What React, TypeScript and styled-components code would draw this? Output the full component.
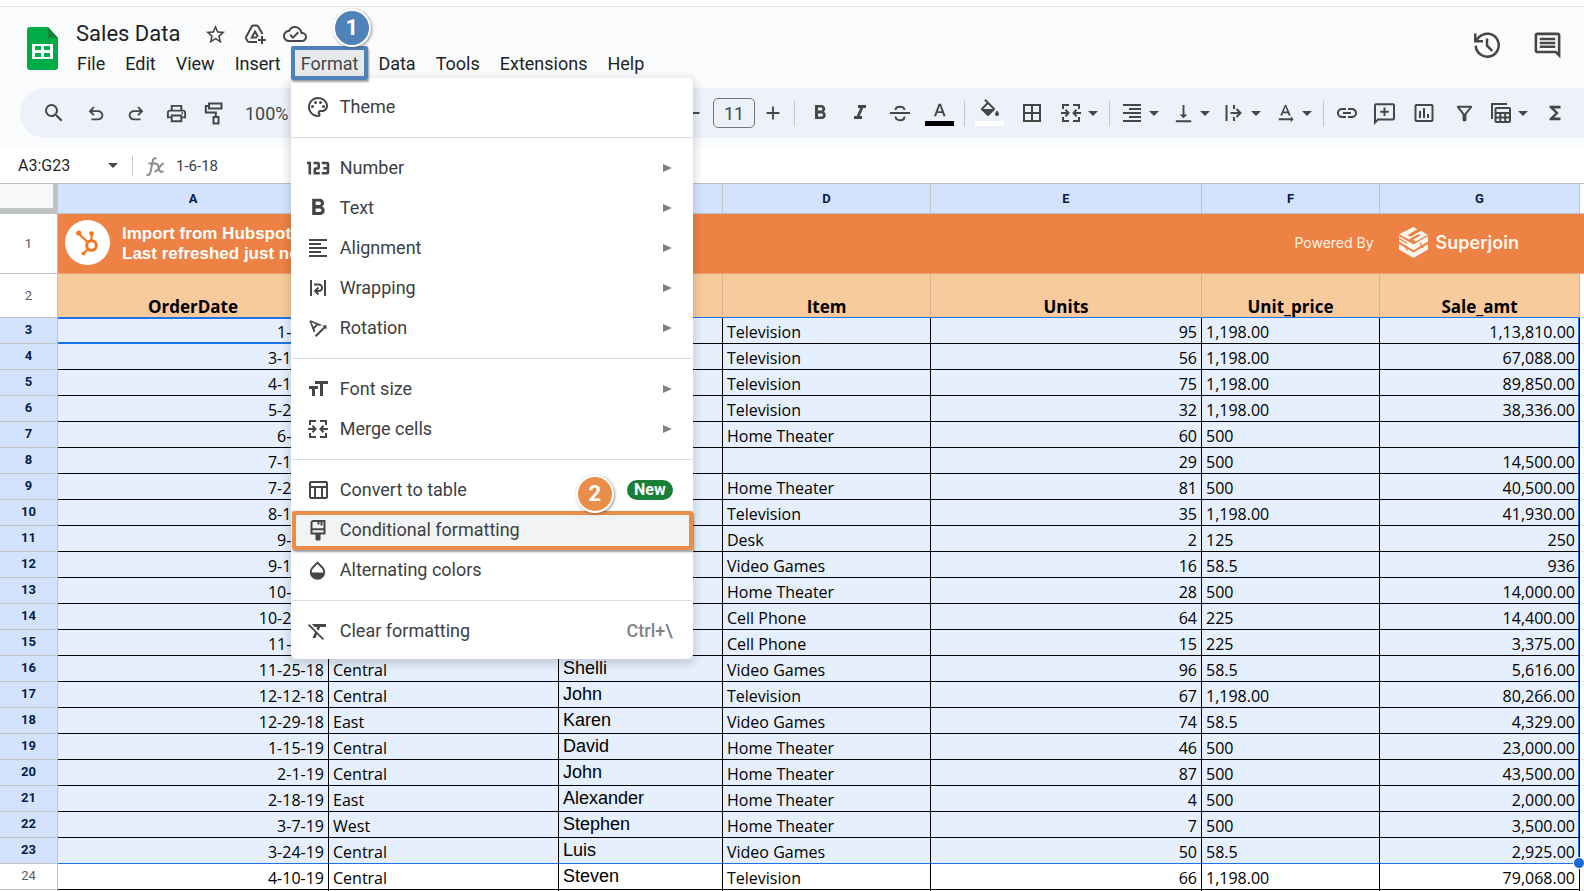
import React from 'react';
import styled, { createGlobalStyle, css } from 'styled-components';
import {
  MdAdd,
  MdBorderAll,
  MdFormatAlignLeft,
  MdFormatAlignRight,
  MdFormatBold,
  MdFormatClear,
  MdFormatItalic,
  MdFormatSize,
  MdFunctions,
  MdInsertChartOutlined,
  MdLink,
  MdOpacity,
  MdOutlineCloudDone,
  MdOutlineComment,
  MdOutlineFilterAlt,
  MdOutlinePalette,
  MdOutlinePrint,
  MdOutlineTableChart,
  MdRemove,
  MdSearch,
  MdStarBorder,
  MdTextRotationAngleup,
  MdTextRotationNone,
  MdVerticalAlignBottom,
} from 'react-icons/md';

const ui = "Roboto, 'Liberation Sans', sans-serif";
const grid = "'Open Sans', 'Noto Sans', sans-serif";
const arial = "'Liberation Sans', Arial, sans-serif";

const GlobalStyle = createGlobalStyle`
  *, *::before, *::after { box-sizing: border-box; }
  body { margin: 0; background: #fff; font-family: ${ui}; color: #1f1f1f; }
  button, input, select { font: inherit; color: inherit; margin: 0; padding: 0; border: 0; background: none; }
  svg { display: block; flex: none; }
`;

/* ---------- page frame ---------- */

const Page = styled.div`
  display: flex;
  flex-direction: column;
  height: 100vh;
  overflow: hidden;
  padding-top: 6px;
`;

const Chrome = styled.div`
  flex: none;
  background: #f9fbfd;
  border-top: 1px solid #dfe3e7;
  padding-bottom: 10px;
`;

const Header = styled.header`
  display: flex;
  align-items: flex-start;
  height: 81px;
  padding: 12px 17px 0 27px;
`;

const LogoLink = styled.a`
  margin-top: 8px;
  width: 40px;
  flex: none;
`;

const Titles = styled.div`
  flex: 1;
  min-width: 0;
`;

const TitleRow = styled.div`
  display: flex;
  align-items: center;
  height: 30px;
  padding-left: 9px;
`;

const DocTitle = styled.h1`
  margin: 0 15px 0 0;
  font-size: 22px;
  font-weight: 400;
  line-height: 28px;
`;

const IconButton = styled.button`
  display: flex;
  align-items: center;
  justify-content: center;
  width: 40px;
  height: 30px;
  color: #444746;
`;

const MenuBar = styled.nav`
  display: flex;
`;

const MenuSlot = styled.div`
  position: relative;
`;

const MenuName = styled.button<{ $open?: boolean }>`
  height: 29px;
  padding: 0 10px;
  font-size: 18px;
  line-height: 29px;
  background: ${(p) => (p.$open ? '#e6eaec' : 'transparent')};
  color: ${(p) => (p.$open ? '#444746' : '#1f1f1f')};
`;

const HeaderActions = styled.div`
  display: flex;
  gap: 20px;
  padding-top: 11px;
`;

/* ---------- callouts ---------- */

const calloutColor = { blue: '#4f82b8', orange: '#e88e48' };

const Frame = styled.span<{ $tone: keyof typeof calloutColor }>`
  position: absolute;
  z-index: 3;
  pointer-events: none;
  inset: ${(p) => (p.$tone === 'blue' ? '-3px 0 -2px 0' : '1px 0 0 1px')};
  border: 4px solid ${(p) => calloutColor[p.$tone]};
  border-radius: 2px;
  box-shadow: 1px 2px 2px rgba(60, 64, 67, 0.5);
`;

const StepBadge = styled.span<{ $tone: keyof typeof calloutColor }>`
  position: absolute;
  z-index: 4;
  top: ${(p) => (p.$tone === 'blue' ? '-40px' : '-35px')};
  ${(p) => (p.$tone === 'blue' ? 'left: 42px;' : 'right: 79px;')}
  width: 38px;
  height: 38px;
  border: 2px solid #fff;
  border-radius: 50%;
  background: ${(p) => calloutColor[p.$tone]};
  box-shadow: 1px 1px 3px rgba(60, 64, 67, 0.55);
  color: #fff;
  font-size: 22px;
  font-weight: 700;
  line-height: 34px;
  text-align: center;
`;

/* ---------- format menu ---------- */

const Dropdown = styled.div`
  position: absolute;
  z-index: 2;
  top: 100%;
  left: 0;
  width: 402px;
  padding: 9px 0 8px;
  border-radius: 5px;
  background: #fff;
  box-shadow: 0 3px 8px 2px rgba(60, 64, 67, 0.2);
`;

const MenuItem = styled.button<{ $active?: boolean }>`
  position: relative;
  display: flex;
  align-items: center;
  width: 100%;
  height: 40px;
  padding: 0 20px 0 15px;
  font-size: 18px;
  text-align: left;
  color: #3c4043;
  background: ${(p) => (p.$active ? '#f1f3f4' : 'transparent')};
`;

const MenuIcon = styled.span`
  display: flex;
  justify-content: center;
  width: 24px;
  margin-right: 10px;
  color: #444746;
`;

const MenuLabel = styled.span`
  flex: 1;
  padding-bottom: 2px;
`;

const Divider = styled.hr`
  height: 1px;
  margin: 10px 1px;
  border: 0;
  background: #d7dce2;
`;

const Shortcut = styled.kbd`
  padding-bottom: 2px;
  font-family: ${ui};
  font-weight: 500;
  color: #808487;
`;

const NewTag = styled.span`
  padding: 0 7px;
  border-radius: 10px;
  background: #188038;
  color: #fff;
  font-size: 16px;
  font-weight: 700;
  line-height: 20px;
`;

/* ---------- toolbar ---------- */

const Toolbar = styled.div`
  display: flex;
  align-items: center;
  height: 50px;
  margin-left: 20px;
  padding-left: 12px;
  overflow: hidden;
  border-radius: 25px 0 0 25px;
  background: #ecf1fa;
  color: #444746;
`;

const Tool = styled.button<{ $size?: 's' | 'm' | 'l' }>`
  display: flex;
  flex: none;
  align-items: center;
  justify-content: center;
  width: ${(p) => (p.$size === 's' ? 35 : p.$size === 'l' ? 44 : 40)}px;
  height: 40px;
`;

const SplitTool = styled.button`
  display: flex;
  flex: none;
  align-items: center;
  width: 51px;
  height: 40px;
`;

const SplitIcon = styled.span`
  display: flex;
  justify-content: center;
  width: 34px;
`;

const Caret = styled.span`
  flex: none;
  width: 10px;
  border: 5px solid transparent;
  border-top-color: #444746;
  border-bottom: 0;
`;

const Separator = styled.span`
  flex: none;
  width: 1px;
  height: 25px;
  margin: 0 5px 0 4px;
  background: #c4c7c5;
`;

const ZoomSelect = styled.select`
  flex: none;
  width: 432px;
  padding-left: 14px;
  appearance: none;
  font-size: 18px;
`;

const SizeInput = styled.input`
  flex: none;
  width: 42px;
  height: 30px;
  border: 1px solid #747775;
  border-radius: 5px;
  font-size: 18px;
  text-align: center;
`;

/* ---------- formula bar ---------- */

const FormulaBar = styled.div`
  display: flex;
  flex: none;
  align-items: center;
  height: 35px;
  background: #fff;
`;

const NameBox = styled.input`
  width: 90px;
  padding-left: 18px;
  font-size: 16px;
  box-sizing: content-box;
`;

const BarLine = styled.span`
  width: 1px;
  height: 20px;
  margin: 0 13px 0 14px;
  background: #c4c7c5;
`;

const FormulaInput = styled.input`
  flex: 1;
  min-width: 0;
  margin-left: 11px;
  font-size: 15px;
  color: #3c4043;
`;

/* ---------- sheet ---------- */

const SheetArea = styled.main`
  flex: 1;
  min-height: 0;
  overflow: hidden;
  border-top: 1px solid #c0c3c6;
`;

const Sheet = styled.table`
  width: 100%;
  table-layout: fixed;
  border-collapse: separate;
  border-spacing: 0;
  font-family: ${grid};
  font-size: 16px;
  line-height: 22px;
  color: #000;

  th, td { padding: 0; white-space: nowrap; }
`;

const Col = styled.col<{ $w?: number }>`
  ${(p) => p.$w && css`width: ${p.$w}px;`}
`;

const Corner = styled.td`
  height: 30px;
  border: solid #c0c3c3;
  border-width: 0 5px 6px 0;
  background: #f8f9fa;
`;

const ColumnHead = styled.th`
  border-right: 1px solid #c0c3c6;
  border-bottom: 1px solid #c0c3c6;
  background: #d3e3fd;
  color: #041e49;
  font-family: ${ui};
  font-size: 13px;
  font-weight: 700;
`;

const EdgeHead = styled.td`
  border-bottom: 1px solid #c0c3c6;
  background: #fff;
`;

const RowHead = styled.th<{ $selected?: boolean; $short?: boolean }>`
  ${(p) => p.$short && css`&& { padding-bottom: 2px; }`}
  border-right: 1px solid #c0c3c6;
  border-bottom: 1px solid #c0c3c6;
  background: ${(p) => (p.$selected ? '#d3e3fd' : '#fff')};
  color: ${(p) => (p.$selected ? '#041e49' : '#575b5f')};
  font-family: ${ui};
  font-size: 13px;
  font-weight: ${(p) => (p.$selected ? 700 : 400)};
`;

const BannerCell = styled.td`
  height: 60px;
  border-bottom: 1px solid #e9a273;
  background: #ee8144;
  color: #fff;
`;

const Banner = styled.div`
  display: flex;
  align-items: center;
  height: 59px;
  padding: 0 65px 2px 7px;
`;

const HubCircle = styled.span`
  display: flex;
  align-items: center;
  justify-content: center;
  width: 45px;
  height: 45px;
  margin-right: 12px;
  border-radius: 50%;
  background: #fff;
`;

const BannerText = styled.p`
  flex: 1;
  margin: 0;
  padding-top: 2px;
  font-family: ${arial};
  font-size: 17px;
  font-weight: 700;
  line-height: 20px;
`;

const PoweredBy = styled.span`
  margin-right: 25px;
  font-family: Inter, sans-serif;
  font-size: 14px;
  color: #fff3e4;
`;

const Brand = styled.span`
  margin-left: 8px;
  font-family: Inter, sans-serif;
  font-size: 18px;
  font-weight: 600;
  color: #fff6ea;
`;

const TitleCell = styled.td`
  height: 44px;
  border-right: 1px solid #deb092;
  border-bottom: 1px solid #1a73e8;
  background: #f9ca9c;
  font-size: 17px;
  font-weight: 700;
  line-height: 20px;
  text-align: center;
  vertical-align: bottom;
`;

type CellProps = { $selected?: boolean; $align?: 'left' | 'right'; $active?: boolean; $last?: boolean; $edge?: boolean };

const Cell = styled.td<CellProps>`
  position: relative;
  height: 26px;
  && { padding: 0 4px; }
  border-right: 1px solid #000;
  border-bottom: 1px solid ${(p) => (p.$last ? '#1a73e8' : '#000')};
  background: ${(p) => (p.$selected ? '#e5effd' : '#fff')};
  text-align: ${(p) => p.$align ?? 'left'};
  vertical-align: bottom;
  ${(p) => p.$edge && p.$selected && css`box-shadow: inset -1px 0 0 #1a73e8;`}
  ${(p) =>
    p.$active &&
    css`
      border-bottom-color: #1a73e8;
      box-shadow: inset 0 1px 0 #1a73e8, inset 0 -1px 0 #1a73e8;
    `}
`;

const NameCell = styled(Cell)`
  && { padding: 1px 4px 0; }
  font-family: ${arial};
  font-size: 18px;
  vertical-align: top;
`;

const EdgeCell = styled.td`
  border-bottom: 1px solid #e2e3e3;
  background: #fff;
`;

const FillHandle = styled.span`
  position: absolute;
  z-index: 1;
  right: -6px;
  bottom: -6px;
  width: 12px;
  height: 12px;
  border: 1px solid #fff;
  border-radius: 50%;
  background: #1967d2;
`;

/* ---------- icons ---------- */

type IconProps = { size?: number; flip?: boolean };

const StrokeSvg = styled.svg`
  fill: none;
  stroke: currentColor;
  stroke-width: 2;
`;

const Stroke = ({ size = 24, children }: IconProps & { children: React.ReactNode }) => (
  <StrokeSvg width={size} height={size} viewBox="0 0 24 24" aria-hidden="true">
    {children}
  </StrokeSvg>
);

const SheetsLogo = () => (
  <svg width="31" height="43" viewBox="0 0 31 43" aria-hidden="true">
    <path d="M3 0h18l10 11v29a3 3 0 0 1-3 3H3a3 3 0 0 1-3-3V3a3 3 0 0 1 3-3z" fill="#00ac47" />
    <path d="M21 0l10 11H21z" fill="#188038" />
    <path d="M5 17h21v15H5zM8 19v4h6v-4zm9 0v4h6v-4zM8 26v4h6v-4zm9 0v4h6v-4z" fill="#fff" fillRule="evenodd" />
  </svg>
);

const DriveAddIcon = () => (
  <Stroke>
    <path d="M14 20H6.200q-1.200 0-1.800-1l-1.200-2.200q-.5-1 0-2L8.800 4.500q.6-1 1.700-1h3q1.100 0 1.700 1l4.300 7.500" />
    <path d="M14 15.500H8.800L12 9.600l3 5.200M19 14v8M15 18h8" />
  </Stroke>
);

const UndoIcon = ({ flip }: IconProps) => (
  <svg width="22" height="22" viewBox="0 0 24 24" fill="currentColor" aria-hidden="true">
    <path
      transform={flip ? 'matrix(-1 0 0 1 24 1)' : 'translate(0 1)'}
      d="M7 19v-2h7.1q1.575 0 2.737-1T18 13.5t-1.163-2.5T14.1 10H7.8l2.6 2.6L9 14 4 9l5-5 1.4 1.4L7.8 8h6.3q2.425 0 4.163 1.575T20 13.5t-1.737 3.925T14.1 19z"
    />
  </svg>
);

const RollerIcon = () => (
  <Stroke>
    <path d="M7 2.500h12.500v5H7zM7 5H3.800v6.500h10V16M11.500 16h5v6.500h-5z" />
  </Stroke>
);

const StrikeIcon = () => (
  <Stroke>
    <path d="M2 12h20M7.500 9c0-4.500 8.500-4.500 9 0M7.500 15.500c.5 5 9 5 9 0" />
  </Stroke>
);

const TextColorIcon = () => (
  <svg width="30" height="28" viewBox="0 0 30 28" aria-hidden="true">
    <path
      transform="translate(4 2) scale(.9)"
      fill="currentColor"
      d="M5.490 17h2.420l1.270-3.580h5.650L16.090 17h2.420L13.250 3h-2.500L5.490 17zm4.420-5.610l2.030-5.790h.12l2.030 5.790H9.910z"
    />
    <path d="M0 22h29v5H0z" fill="#000" />
  </svg>
);

const FillColorIcon = () => (
  <svg width="30" height="28" viewBox="0 0 30 28" aria-hidden="true">
    <path
      transform="translate(3)"
      fill="currentColor"
      d="M16.560 8.940L7.620 0 6.210 1.410l2.380 2.380-5.150 5.150c-.59.59-.59 1.540 0 2.120l5.500 5.500c.29.29.68.44 1.060.44s.77-.15 1.060-.44l5.500-5.500c.59-.58.59-1.530 0-2.120zM5.210 10L10 5.210 14.790 10H5.210zM19 11.500s-2 2.170-2 3.500c0 1.100.9 2 2 2s2-.9 2-2c0-1.330-2-3.500-2-3.500z"
    />
    <path d="M0 22h29v5H0z" fill="#fff" />
  </svg>
);

const NumberIcon = () => (
  <StrokeSvg width="24" height="24" viewBox="0 0 24 24" aria-hidden="true">
    <path
      strokeWidth="2.600"
      d="M1 7h2.800v11.500M7.500 7h4.200q1 0 1 1v3.500q0 1-1 1H9.800q-1 0-1 1v3.700h5M15.800 7h5.200q1 0 1 1v8.200q0 1-1 1h-5.200M17.300 12.200H22"
    />
  </StrokeSvg>
);

const MergeIcon = () => (
  <Stroke>
    <path d="M10 4H4v4M4 16v4h6M14 4h6v4M20 16v4h-6M2 12h7M6.500 8.800L9.500 12l-3 3.200M22 12h-7M17.500 8.800L14.500 12l3 3.200" />
  </Stroke>
);

const OverflowIcon = () => (
  <Stroke>
    <path d="M4.500 4v16M12 4v4M12 16v4M8.500 12H18M14.500 8l4 4-4 4" />
  </Stroke>
);

const WrapIcon = () => (
  <Stroke>
    <path d="M5 4v16M19 4v16M8 8.500h4.800a3.200 3.200 0 0 1 0 6.500H10M12.500 11.500L9 15l3.500 3.500" />
  </Stroke>
);

const AddCommentIcon = () => (
  <Stroke>
    <path d="M3 21.500V4.200q0-1 1-1h17q1 0 1 1v13.300q0 1-1 1H6zM12.500 6.500v8.500M8.200 10.800h8.600" />
  </Stroke>
);

const TableViewsIcon = () => (
  <Stroke>
    <path d="M3 18V3h15M7.500 7H20q1 0 1 1v12q0 1-1 1H7.500q-1 0-1-1V8q0-1 1-1zM6.500 12H21M6.500 16.500H21M11.300 12v9M16.200 12v9" />
  </Stroke>
);

const BrushIcon = () => (
  <Stroke>
    <path d="M5.500 15.500V5q0-2 2-2h11v12.500zM5.500 11.300h13M12.500 3v3.500M15.500 3v4.500" />
    <path d="M9.500 15h5v6.500q0 1-1 1h-3q-1 0-1-1z" fill="currentColor" stroke="none" />
  </Stroke>
);

const HistoryIcon = () => (
  <Stroke size={30}>
    <path d="M3 12.500a9.200 9.200 0 1 0 2.800-7L2.600 9M2.600 2.800V9h6.200M12 6.800v5.700l4.200 4.200" />
  </Stroke>
);

const FxIcon = () => (
  <svg width="19" height="22" viewBox="0 0 19 22" fill="none" stroke="#8a8d90" strokeWidth="2" aria-hidden="true">
    <path d="M10.500 3.500C8 2.500 7 4 6.500 7L4.500 17c-.5 2.500-1.500 3.500-4 2.500M2.500 8.500h7M9 9c3-1 3 2 4.500 6 .5 2 2 2.500 4 1M18 8.500c-4-.5-5 8.500-9.500 8" />
  </svg>
);

const HubSpotIcon = () => (
  <svg width="24" height="28" viewBox="0 0 24 28" fill="none" stroke="#f57722" aria-hidden="true">
    <circle cx="15.500" cy="16.500" r="4.800" strokeWidth="3" />
    <path d="M15.500 11V6M11.500 13L3.500 5.500M12 20l-4 4" strokeWidth="2.200" />
    <g fill="#f57722" stroke="none">
      <circle cx="15.500" cy="4.500" r="2.300" />
      <circle cx="2.800" cy="4" r="2.600" />
      <circle cx="7.500" cy="24.500" r="1.900" />
    </g>
  </svg>
);

const SuperjoinLogo = () => (
  <svg width="29" height="31" viewBox="0 0 29 31" aria-hidden="true">
    <g fill="#fff8ee">
      <path d="M14.500 0l3.800 2.200L8.500 8l3 1.800L22 3.800l6.500 3.900L17 14.500l-3-1.800 7.500-4.500-2-1.200-9.500 5.600L0 7.200z" />
      <path d="M0 9l14.500 8.600L29 9v5.600l-14.500 8.600L0 14.600z" />
      <path d="M0 17l14.500 8.600L29 17v5.400L14.500 31 0 22.400z" />
    </g>
    <path d="M0 11.500l8 4.700M21 15.800l3 5M5.500 18.500l3 5" stroke="#ee8144" strokeWidth="1.300" />
  </svg>
);

/* ---------- data ---------- */

type MenuEntry = {
  label: string;
  icon: React.ReactNode;
  submenu?: boolean;
  isNew?: boolean;
  active?: boolean;
  shortcut?: string;
};

const formatMenu: MenuEntry[][] = [
  [{ label: 'Theme', icon: <MdOutlinePalette size={24} /> }],
  [
    { label: 'Number', icon: <NumberIcon />, submenu: true },
    { label: 'Text', icon: <MdFormatBold size={28} />, submenu: true },
    { label: 'Alignment', icon: <MdFormatAlignLeft size={24} />, submenu: true },
    { label: 'Wrapping', icon: <WrapIcon />, submenu: true },
    { label: 'Rotation', icon: <MdTextRotationAngleup size={24} />, submenu: true },
  ],
  [
    { label: 'Font size', icon: <MdFormatSize size={24} />, submenu: true },
    { label: 'Merge cells', icon: <MergeIcon />, submenu: true },
  ],
  [
    { label: 'Convert to table', icon: <MdOutlineTableChart size={24} />, isNew: true },
    { label: 'Conditional formatting', icon: <BrushIcon />, active: true },
    { label: 'Alternating colors', icon: <MdOpacity size={23} /> },
  ],
  [{ label: 'Clear formatting', icon: <MdFormatClear size={24} />, shortcut: 'Ctrl+\\' }],
];

const SubArrow = styled.span`
  width: 9px;
  margin-right: 1px;
  border: 4px solid transparent;
  border-left: 9px solid #808487;
  border-right: 0;
`;

const menuNames = ['File', 'Edit', 'View', 'Insert', 'Format', 'Data', 'Tools', 'Extensions', 'Help'];

const columns = [
  { letter: 'A', width: 271, title: 'OrderDate' },
  { letter: 'B', width: 230, title: '' },
  { letter: 'C', width: 164, title: '' },
  { letter: 'D', width: 208, title: 'Item' },
  { letter: 'E', width: 271, title: 'Units' },
  { letter: 'F', width: 178, title: 'Unit_price' },
  { letter: 'G', width: 200, title: 'Sale_amt' },
];

type Row = [date: string, region: string, rep: string, item: string, units: string, price: string, sale: string];

const rows: Row[] = [
  ['1-6-18', '', '', 'Television', '95', '1,198.00', '1,13,810.00'],
  ['3-15-18', '', '', 'Television', '56', '1,198.00', '67,088.00'],
  ['4-18-18', '', '', 'Television', '75', '1,198.00', '89,850.00'],
  ['5-22-18', '', '', 'Television', '32', '1,198.00', '38,336.00'],
  ['6-8-18', '', '', 'Home Theater', '60', '500', ''],
  ['7-12-18', '', '', '', '29', '500', '14,500.00'],
  ['7-29-18', '', '', 'Home Theater', '81', '500', '40,500.00'],
  ['8-15-18', '', '', 'Television', '35', '1,198.00', '41,930.00'],
  ['9-1-18', '', '', 'Desk', '2', '125', '250'],
  ['9-18-18', '', '', 'Video Games', '16', '58.5', '936'],
  ['10-5-18', '', '', 'Home Theater', '28', '500', '14,000.00'],
  ['10-22-18', '', '', 'Cell Phone', '64', '225', '14,400.00'],
  ['11-8-18', '', '', 'Cell Phone', '15', '225', '3,375.00'],
  ['11-25-18', 'Central', 'Shelli', 'Video Games', '96', '58.5', '5,616.00'],
  ['12-12-18', 'Central', 'John', 'Television', '67', '1,198.00', '80,266.00'],
  ['12-29-18', 'East', 'Karen', 'Video Games', '74', '58.5', '4,329.00'],
  ['1-15-19', 'Central', 'David', 'Home Theater', '46', '500', '23,000.00'],
  ['2-1-19', 'Central', 'John', 'Home Theater', '87', '500', '43,500.00'],
  ['2-18-19', 'East', 'Alexander', 'Home Theater', '4', '500', '2,000.00'],
  ['3-7-19', 'West', 'Stephen', 'Home Theater', '7', '500', '3,500.00'],
  ['3-24-19', 'Central', 'Luis', 'Video Games', '50', '58.5', '2,925.00'],
  ['4-10-19', 'Central', 'Steven', 'Television', '66', '1,198.00', '79,068.00'],
];

const FIRST_ROW = 3;
const LAST_SELECTED = 23;

/* ---------- sections ---------- */

const FormatDropdown = () => (
  <Dropdown role="menu">
    {formatMenu.map((group, g) => (
      <React.Fragment key={g}>
        {g > 0 && <Divider />}
        {group.map((item) => (
          <MenuItem key={item.label} role="menuitem" $active={item.active}>
            <MenuIcon>{item.icon}</MenuIcon>
            <MenuLabel>{item.label}</MenuLabel>
            {item.submenu && <SubArrow />}
            {item.isNew && <NewTag>New</NewTag>}
            {item.shortcut && <Shortcut>{item.shortcut}</Shortcut>}
            {item.active && <Frame $tone="orange" />}
            {item.active && <StepBadge $tone="orange">2</StepBadge>}
          </MenuItem>
        ))}
      </React.Fragment>
    ))}
  </Dropdown>
);

const TopBar = () => (
  <Header>
    <LogoLink href="#" aria-label="Sheets home">
      <SheetsLogo />
    </LogoLink>
    <Titles>
      <TitleRow>
        <DocTitle>Sales Data</DocTitle>
        <IconButton aria-label="Star"><MdStarBorder size={23} /></IconButton>
        <IconButton aria-label="Add to Drive"><DriveAddIcon /></IconButton>
        <IconButton aria-label="Saved"><MdOutlineCloudDone size={24} /></IconButton>
      </TitleRow>
      <MenuBar>
        {menuNames.map((name) => (
          <MenuSlot key={name}>
            <MenuName $open={name === 'Format'}>{name}</MenuName>
            {name === 'Format' && (
              <>
                <Frame $tone="blue" />
                <StepBadge $tone="blue">1</StepBadge>
                <FormatDropdown />
              </>
            )}
          </MenuSlot>
        ))}
      </MenuBar>
    </Titles>
    <HeaderActions>
      <IconButton aria-label="Version history"><HistoryIcon /></IconButton>
      <IconButton aria-label="Comments"><MdOutlineComment size={31} /></IconButton>
    </HeaderActions>
  </Header>
);

const Split = ({ label, children }: { label: string; children: React.ReactNode }) => (
  <SplitTool aria-label={label}>
    <SplitIcon>{children}</SplitIcon>
    <Caret />
  </SplitTool>
);

const ToolRow = () => (
  <Toolbar role="toolbar">
    <Tool $size="l" aria-label="Search"><MdSearch size={24} /></Tool>
    <Tool aria-label="Undo"><UndoIcon /></Tool>
    <Tool aria-label="Redo"><UndoIcon flip /></Tool>
    <Tool aria-label="Print"><MdOutlinePrint size={23} /></Tool>
    <Tool $size="s" aria-label="Paint format"><RollerIcon /></Tool>
    <ZoomSelect aria-label="Zoom"><option>100%</option></ZoomSelect>
    <Separator />
    <Tool aria-label="Decrease font size"><MdRemove size={22} /></Tool>
    <SizeInput aria-label="Font size" defaultValue="11" />
    <Tool $size="s" aria-label="Increase font size"><MdAdd size={22} /></Tool>
    <Separator />
    <Tool aria-label="Bold"><MdFormatBold size={24} /></Tool>
    <Tool aria-label="Italic"><MdFormatItalic size={24} /></Tool>
    <Tool aria-label="Strikethrough"><StrikeIcon /></Tool>
    <Tool aria-label="Text color"><TextColorIcon /></Tool>
    <Separator />
    <Tool aria-label="Fill color"><FillColorIcon /></Tool>
    <Tool $size="l" aria-label="Borders"><MdBorderAll size={24} /></Tool>
    <Split label="Merge cells"><MergeIcon /></Split>
    <Separator />
    <Split label="Horizontal align"><MdFormatAlignRight size={24} /></Split>
    <Split label="Vertical align"><MdVerticalAlignBottom size={23} /></Split>
    <Split label="Text wrapping"><OverflowIcon /></Split>
    <Split label="Text rotation"><MdTextRotationNone size={23} /></Split>
    <Separator />
    <Tool $size="s" aria-label="Insert link"><MdLink size={24} /></Tool>
    <Tool aria-label="Insert comment"><AddCommentIcon /></Tool>
    <Tool aria-label="Insert chart"><MdInsertChartOutlined size={24} /></Tool>
    <Tool aria-label="Create a filter"><MdOutlineFilterAlt size={23} /></Tool>
    <Split label="Filter views"><TableViewsIcon /></Split>
    <Tool aria-label="Functions"><MdFunctions size={22} /></Tool>
  </Toolbar>
);

const SheetTable = () => (
  <Sheet>
    <colgroup>
      <Col $w={58} />
      {columns.map((c) => <Col key={c.letter} $w={c.width} />)}
      <Col />
    </colgroup>
    <thead>
      <tr>
        <Corner />
        {columns.map((c) => <ColumnHead key={c.letter} scope="col">{c.letter}</ColumnHead>)}
        <EdgeHead />
      </tr>
    </thead>
    <tbody>
      <tr>
        <RowHead scope="row">1</RowHead>
        <BannerCell colSpan={8}>
          <Banner>
            <HubCircle><HubSpotIcon /></HubCircle>
            <BannerText>
              Import from Hubspot
              <br />
              Last refreshed just now
            </BannerText>
            <PoweredBy>Powered By</PoweredBy>
            <SuperjoinLogo />
            <Brand>Superjoin</Brand>
          </Banner>
        </BannerCell>
      </tr>
      <tr>
        <RowHead scope="row">2</RowHead>
        {columns.map((c) => <TitleCell key={c.letter}>{c.title}</TitleCell>)}
        <EdgeCell />
      </tr>
      {rows.map(([date, region, rep, item, units, price, sale], i) => {
        const n = FIRST_ROW + i;
        const state = { $selected: n <= LAST_SELECTED, $last: n === LAST_SELECTED };
        return (
          <tr key={n}>
            <RowHead scope="row" $short $selected={state.$selected}>{n}</RowHead>
            <Cell {...state} $align="right" $active={i === 0}>{date}</Cell>
            <Cell {...state}>{region}</Cell>
            <NameCell {...state}>{rep}</NameCell>
            <Cell {...state}>{item}</Cell>
            <Cell {...state} $align="right">{units}</Cell>
            <Cell {...state}>{price}</Cell>
            <Cell {...state} $align="right" $edge>
              {sale}
              {state.$last && <FillHandle />}
            </Cell>
            <EdgeCell />
          </tr>
        );
      })}
      <tr>
        <RowHead />
        {columns.map((c) => <Cell key={c.letter} />)}
        <EdgeCell />
      </tr>
    </tbody>
  </Sheet>
);

export default function App() {
  return (
    <>
      <GlobalStyle />
      <Page>
        <Chrome>
          <TopBar />
          <ToolRow />
        </Chrome>
        <FormulaBar>
          <NameBox aria-label="Name box" defaultValue="A3:G23" />
          <Caret />
          <BarLine />
          <FxIcon />
          <FormulaInput aria-label="Formula" defaultValue="1-6-18" />
        </FormulaBar>
        <SheetArea>
          <SheetTable />
        </SheetArea>
      </Page>
    </>
  );
}
